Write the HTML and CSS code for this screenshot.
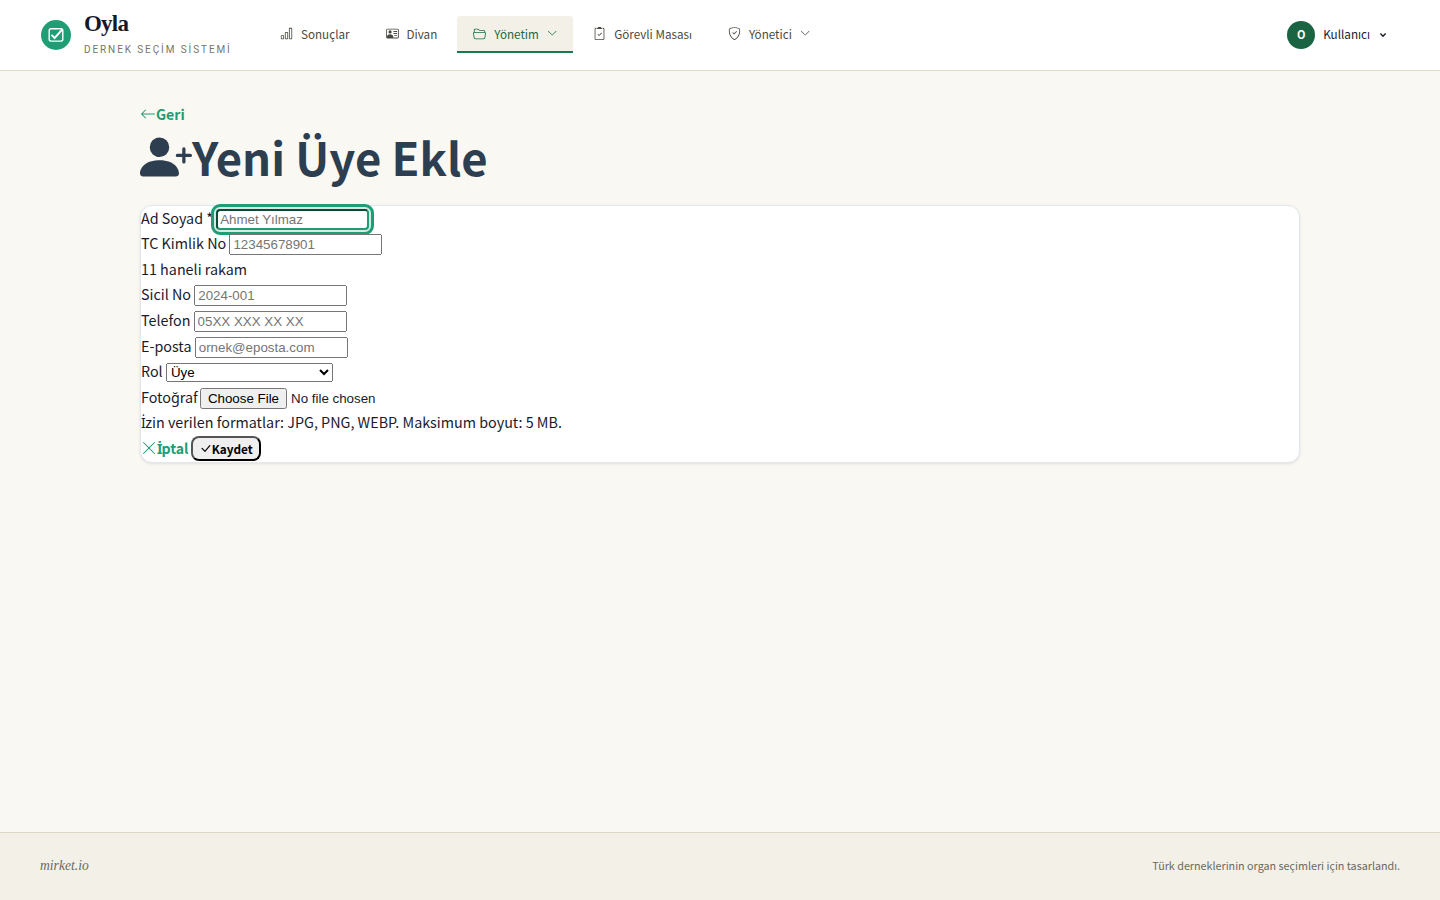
FILE: index.html
```html
<!DOCTYPE html>
<html lang="tr">
<head>
  <title>Yeni Üye Ekle - Oyla</title>
  <meta name="viewport" content="width=device-width, initial-scale=1">
  <meta charset="UTF-8">
  <link rel="stylesheet" href="styles.css">
</head>
<body>
  <header class="header">
    <a class="brand" href="#">
      <svg class="brand-mark" viewBox="0 0 30 30">
        <circle cx="15" cy="15" r="15" fill="#1f9d74"/>
        <rect x="8.2" y="8.7" width="13.6" height="12.4" rx="1.8" fill="none" stroke="#fff" stroke-width="1.4"/>
        <path d="M10.5 14.8l3.1 3.2 7.8-8.6" fill="none" stroke="#fff" stroke-width="1.9"/>
      </svg>
      <span class="brand-text">
        <span class="brand-name">Oyla</span>
        <span class="brand-sub">DERNEK SEÇİM SİSTEMİ</span>
      </span>
    </a>

    <nav class="nav">
      <a class="nav-link" href="#">
        <svg class="icon" viewBox="0 0 16 16"><path d="M4 11H2v3h2zm5-4H7v7h2zm5-5v12h-2V2zm-2-1a1 1 0 0 0-1 1v12a1 1 0 0 0 1 1h2a1 1 0 0 0 1-1V2a1 1 0 0 0-1-1zM6 7a1 1 0 0 1 1-1h2a1 1 0 0 1 1 1v7a1 1 0 0 1-1 1H7a1 1 0 0 1-1-1zm-5 4a1 1 0 0 1 1-1h2a1 1 0 0 1 1 1v3a1 1 0 0 1-1 1H2a1 1 0 0 1-1-1z"/></svg>
        <span>Sonuçlar</span>
      </a>
      <a class="nav-link" href="#">
        <svg class="icon" viewBox="0 0 16 16"><path d="M5 8a2 2 0 1 0 0-4 2 2 0 0 0 0 4m4-2.5a.5.5 0 0 1 .5-.5h4a.5.5 0 0 1 0 1h-4a.5.5 0 0 1-.5-.5M9 8a.5.5 0 0 1 .5-.5h4a.5.5 0 0 1 0 1h-4A.5.5 0 0 1 9 8m1 2.5a.5.5 0 0 1 .5-.5h3a.5.5 0 0 1 0 1h-3a.5.5 0 0 1-.5-.5"/><path d="M2 2a2 2 0 0 0-2 2v8a2 2 0 0 0 2 2h12a2 2 0 0 0 2-2V4a2 2 0 0 0-2-2zM1 4a1 1 0 0 1 1-1h12a1 1 0 0 1 1 1v8a1 1 0 0 1-1 1H8.96q.04-.245.04-.5C9 10.567 7.21 9 5 9c-2.086 0-3.8 1.398-3.984 3.181A1 1 0 0 1 1 12z"/></svg>
        <span>Divan</span>
      </a>
      <a class="nav-link active" href="#">
        <svg class="icon" viewBox="0 0 16 16"><path d="M1 3.5A1.5 1.5 0 0 1 2.5 2h2.764c.958 0 1.76.56 2.311 1.184C7.985 3.648 8.48 4 9 4h4.5A1.5 1.5 0 0 1 15 5.5v.64c.57.265.94.876.856 1.546l-.64 5.124A2.5 2.5 0 0 1 12.733 15H3.266a2.5 2.5 0 0 1-2.481-2.19l-.64-5.124A1.5 1.5 0 0 1 1 6.14zM2 6h12v-.5a.5.5 0 0 0-.5-.5H9c-.964 0-1.71-.629-2.174-1.154C6.374 3.334 5.82 3 5.264 3H2.5a.5.5 0 0 0-.5.5zm-.367 1a.5.5 0 0 0-.496.562l.64 5.124A1.5 1.5 0 0 0 3.266 14h9.468a1.5 1.5 0 0 0 1.489-1.314l.64-5.124A.5.5 0 0 0 14.367 7z"/></svg>
        <span>Yönetim</span>
        <svg class="chevron" viewBox="0 0 16 16"><path d="M1.646 4.646a.5.5 0 0 1 .708 0L8 10.293l5.646-5.647a.5.5 0 0 1 .708.708l-6 6a.5.5 0 0 1-.708 0l-6-6a.5.5 0 0 1 0-.708"/></svg>
      </a>
      <a class="nav-link" href="#">
        <svg class="icon" viewBox="0 0 16 16"><path d="M9.5 0a.5.5 0 0 1 .5.5.5.5 0 0 0 .5.5.5.5 0 0 1 .5.5V2a.5.5 0 0 1-.5.5h-5A.5.5 0 0 1 5 2v-.5a.5.5 0 0 1 .5-.5.5.5 0 0 0 .5-.5.5.5 0 0 1 .5-.5z"/><path d="M3 2.5a.5.5 0 0 1 .5-.5H4a.5.5 0 0 0 0-1h-.5A1.5 1.5 0 0 0 2 2.5v12A1.5 1.5 0 0 0 3.5 16h9a1.5 1.5 0 0 0 1.5-1.5v-12A1.5 1.5 0 0 0 12.5 1H12a.5.5 0 0 0 0 1h.5a.5.5 0 0 1 .5.5v12a.5.5 0 0 1-.5.5h-9a.5.5 0 0 1-.5-.5z"/><path d="M10.854 7.854a.5.5 0 0 0-.708-.708L7.5 9.793 6.354 8.646a.5.5 0 1 0-.708.708l1.5 1.5a.5.5 0 0 0 .708 0z"/></svg>
        <span>Görevli Masası</span>
      </a>
      <a class="nav-link" href="#">
        <svg class="icon" viewBox="0 0 16 16"><path d="M5.338 1.59a61 61 0 0 0-2.837.856.48.48 0 0 0-.328.39c-.554 4.157.726 7.19 2.253 9.188a10.7 10.7 0 0 0 2.287 2.233c.346.244.652.42.893.533q.18.085.293.118a1 1 0 0 0 .101.025 1 1 0 0 0 .1-.025q.114-.034.294-.118c.24-.113.547-.29.893-.533a10.7 10.7 0 0 0 2.287-2.233c1.527-1.997 2.807-5.031 2.253-9.188a.48.48 0 0 0-.328-.39c-.651-.213-1.75-.56-2.837-.855C9.552 1.29 8.531 1.067 8 1.067c-.53 0-1.552.223-2.662.524zM5.072.56C6.157.265 7.31 0 8 0s1.843.265 2.928.56c1.11.3 2.229.655 2.887.87a1.54 1.54 0 0 1 1.044 1.262c.596 4.477-.787 7.795-2.465 9.99a11.8 11.8 0 0 1-2.517 2.453 7 7 0 0 1-1.048.625c-.28.132-.581.24-.829.24s-.548-.108-.829-.24a7 7 0 0 1-1.048-.625 11.8 11.8 0 0 1-2.517-2.453C1.928 10.487.545 7.169 1.141 2.692A1.54 1.54 0 0 1 2.185 1.43 63 63 0 0 1 5.072.56"/><path d="M10.854 5.146a.5.5 0 0 1 0 .708l-3 3a.5.5 0 0 1-.708 0l-1.5-1.5a.5.5 0 1 1 .708-.708L7.5 7.793l2.646-2.647a.5.5 0 0 1 .708 0"/></svg>
        <span>Yönetici</span>
        <svg class="chevron" viewBox="0 0 16 16"><path d="M1.646 4.646a.5.5 0 0 1 .708 0L8 10.293l5.646-5.647a.5.5 0 0 1 .708.708l-6 6a.5.5 0 0 1-.708 0l-6-6a.5.5 0 0 1 0-.708"/></svg>
      </a>
    </nav>

    <button class="user" type="button">
      <span class="avatar">O</span>
      <span class="user-name">Kullanıcı</span>
      <svg class="caret" viewBox="0 0 8 8"><path d="M1.4 2.6L4 5.2l2.6-2.6" fill="none" stroke="currentColor" stroke-width="1.4"/></svg>
    </button>
  </header>

  <main class="main">
    <a class="link" href="#"><svg class="icon-text" viewBox="0 0 16 16"><path d="M15 8a.5.5 0 0 0-.5-.5H2.707l3.147-3.146a.5.5 0 1 0-.708-.708l-4 4a.5.5 0 0 0 0 .708l4 4a.5.5 0 0 0 .708-.708L2.707 8.5H14.5A.5.5 0 0 0 15 8"/></svg>Geri</a>
    <h1 class="title"><svg class="title-icon" viewBox="0 0 16 16"><path d="M1 14s-1 0-1-1 1-4 6-4 6 3 6 4-1 1-1 1zm5-6a3 3 0 1 0 0-6 3 3 0 0 0 0 6"/><path d="M13.5 5a.5.5 0 0 1 .5.5V7h1.5a.5.5 0 0 1 0 1H14v1.5a.5.5 0 0 1-1 0V8h-1.5a.5.5 0 0 1 0-1H13V5.5a.5.5 0 0 1 .5-.5"/></svg><span>Yeni Üye Ekle</span></h1>

    <form class="card">
      <div class="row">
        <label for="name">Ad Soyad *</label>
        <input class="focused" id="name" type="text" placeholder="Ahmet Yılmaz">
      </div>
      <div class="row">
        <label for="tc">TC Kimlik No</label>
        <input id="tc" type="text" placeholder="12345678901">
      </div>
      <div class="row">11 haneli rakam</div>
      <div class="row">
        <label for="sicil">Sicil No</label>
        <input id="sicil" type="text" placeholder="2024-001">
      </div>
      <div class="row">
        <label for="phone">Telefon</label>
        <input id="phone" type="tel" placeholder="05XX XXX XX XX">
      </div>
      <div class="row">
        <label for="email">E-posta</label>
        <input id="email" type="email" placeholder="ornek@eposta.com">
      </div>
      <div class="row">
        <label for="role">Rol</label>
        <select id="role">
          <option>Üye</option>
        </select>
      </div>
      <div class="row">
        <label class="photo-label" for="photo">Fotoğraf</label>
        <input id="photo" type="file">
      </div>
      <div class="row"><span class="dotted">İ</span>zin verilen formatlar: JPG, PNG, WEBP. Maksimum boyut: 5 MB.</div>
      <div class="row">
        <a class="link" href="#"><svg class="icon-text" viewBox="0 0 16 16"><path d="M2.146 2.854a.5.5 0 1 1 .708-.708L8 7.293l5.146-5.147a.5.5 0 0 1 .708.708L8.707 8l5.147 5.146a.5.5 0 0 1-.708.708L8 8.707l-5.146 5.147a.5.5 0 0 1-.708-.708L7.293 8z"/></svg><span class="dotted">İ</span>ptal</a>
        <button class="save" type="button"><svg class="save-icon" viewBox="0 0 16 16"><path d="M12.736 3.97a.733.733 0 0 1 1.047 0c.286.289.29.756.01 1.05L7.88 12.01a.733.733 0 0 1-1.065.02L3.217 8.384a.757.757 0 0 1 0-1.06.733.733 0 0 1 1.047 0l3.052 3.093 5.4-6.425z"/></svg>Kaydet</button>
      </div>
    </form>
  </main>

  <footer class="footer">
    <span class="footer-brand">mirket.io</span>
    <span class="footer-note">Türk derneklerinin organ seçimleri için tasarlandı.</span>
  </footer>
</body>
</html>
```

FILE: styles.css
```css
* {
  box-sizing: border-box;
}
body {
  margin: 0;
  min-height: 100vh;
  display: flex;
  flex-direction: column;
  font-family: "Noto Sans CJK JP", "Noto Sans", sans-serif;
  font-size: 14.33px;
  line-height: 25.6px;
  color: #1a1a2e;
  background: #faf8f3;
}
a {
  text-decoration: none;
}
svg {
  fill: currentColor;
  flex-shrink: 0;
}
.header {
  display: flex;
  align-items: center;
  height: 71px;
  padding: 0 40px;
  background: #fff;
  border-bottom: 1px solid #ddd9c8;
}
.brand {
  display: flex;
  align-items: center;
  gap: 13px;
  width: 224px;
  padding-left: 1px;
  color: #14182b;
}
.brand-mark {
  width: 30px;
  height: 30px;
}
.brand-text {
  display: flex;
  flex-direction: column;
  padding-bottom: 4px;
}
.brand-name {
  font-family: "Liberation Serif", serif;
  font-size: 23px;
  font-weight: 700;
  line-height: 30px;
  letter-spacing: -0.8px;
}
.brand-sub {
  font-family: Roboto, sans-serif;
  font-size: 10px;
  line-height: 16px;
  letter-spacing: 1.9px;
  margin-top: 3px;
  color: #77756a;
  white-space: nowrap;
}
.nav {
  display: flex;
  gap: 4px;
  margin-top: -2px;
}
.nav-link {
  display: flex;
  align-items: center;
  gap: 8px;
  height: 37px;
  padding: 0 16px;
  border-bottom: 2px solid transparent;
  border-radius: 3px 3px 0 0;
  font-size: 11.66px;
  color: #4a4a42;
}
.nav-link span {
  padding-top: 1px;
}
.nav-link.active {
  color: #1a6b45;
  background: #f3f0e8;
  border-bottom-color: #1a7a4f;
}
.icon {
  width: 13px;
  height: 13px;
}
.chevron {
  width: 10.4px;
  height: 10.4px;
}
.user {
  display: flex;
  align-items: center;
  margin-left: auto;
  padding: 0 13px 0 0;
  border: 0;
  background: none;
  font: inherit;
  font-size: 11.7px;
  color: #1a1a2e;
}
.user-name {
  padding-bottom: 3px;
}
.avatar {
  width: 28px;
  height: 28px;
  margin-right: 8px;
  border-radius: 50%;
  background: #1a6443;
  color: #fff;
  font-size: 11px;
  font-weight: 700;
  line-height: 27px;
  text-align: center;
}
.caret {
  width: 8px;
  height: 8px;
  margin-left: 9px;
}
.main {
  flex: 1;
  width: 1160px;
  margin: 0 auto;
  padding-top: 30px;
}
.link {
  font-size: 14.1px;
  font-weight: 700;
  color: #1f9d74;
}
.dotted {
  font-family: "Noto Sans", sans-serif;
  font-size: 14px;
  letter-spacing: -0.5px;
}
.link .dotted {
  letter-spacing: -1px;
}
.icon-text {
  width: 16px;
  height: 16px;
  vertical-align: -2px;
}
.title {
  display: flex;
  align-items: center;
  margin: -1px 0 18px;
  font-size: 45.4px;
  font-weight: 700;
  line-height: 58px;
  height: 60px;
  color: #2c3e50;
}
.title span {
  padding-bottom: 2px;
}
.title-icon {
  width: 52px;
  height: 52px;
}
.card {
  background: #fff;
  border: 1px solid #e2e8f0;
  border-radius: 12px;
  box-shadow: 0 1px 3px rgba(0,0,0,0.1);
}
.row {
  height: 25.6px;
  line-height: 23px;
}
input, select {
  font-family: "Liberation Sans", Arial, sans-serif;
}
input[type="text"], input[type="tel"], input[type="email"] {
  width: 153px;
}
select {
  width: 167px;
}
.photo-label {
  margin-right: -1px;
}
.focused {
  border-color: #1f9d74;
  outline: 3px solid #1f9d74;
  outline-offset: 2px;
  border-radius: 4px;
  box-shadow: 0 0 0 3px rgba(31,157,116,0.2);
}
.save {
  height: 25px;
  margin-left: -1px;
  padding: 1px 6px;
  border-radius: 8px;
  font-family: inherit;
  font-size: 11.8px;
  font-weight: 700;
}
.save-icon {
  width: 13px;
  height: 13px;
  vertical-align: -1px;
}
.footer {
  display: flex;
  align-items: center;
  justify-content: space-between;
  height: 68px;
  padding: 0 40px 2px;
  background: #f3f0e8;
  border-top: 1px solid #ddd9c0;
  color: #6b6960;
}
.footer-brand {
  font-family: "Liberation Serif", serif;
  font-size: 13.6px;
  font-style: italic;
}
.footer-note {
  font-size: 10.75px;
}
```
